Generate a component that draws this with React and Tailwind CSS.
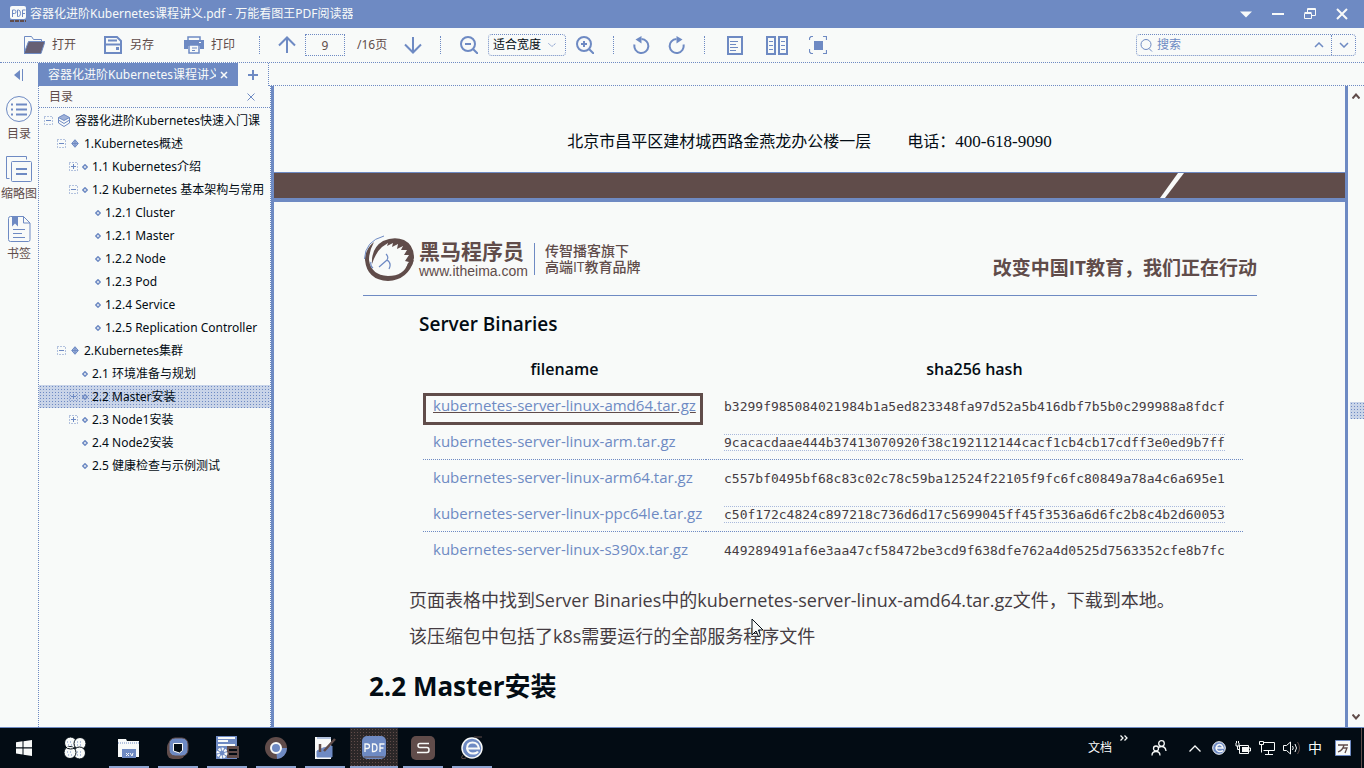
import React from "react";

const tree = [
  { level: 0, mark: "-", text: "容器化进阶Kubernetes快速入门课" },
  { level: 1, mark: "-", text: "1.Kubernetes概述" },
  { level: 2, mark: "+", text: "1.1 Kubernetes介绍" },
  { level: 2, mark: "-", text: "1.2 Kubernetes 基本架构与常用" },
  { level: 3, text: "1.2.1 Cluster" },
  { level: 3, text: "1.2.1 Master" },
  { level: 3, text: "1.2.2 Node" },
  { level: 3, text: "1.2.3 Pod" },
  { level: 3, text: "1.2.4 Service" },
  { level: 3, text: "1.2.5 Replication Controller" },
  { level: 1, mark: "-", text: "2.Kubernetes集群" },
  { level: 2, text: "2.1 环境准备与规划" },
  { level: 2, mark: "+", text: "2.2 Master安装", selected: true },
  { level: 2, mark: "+", text: "2.3 Node1安装" },
  { level: 2, text: "2.4 Node2安装" },
  { level: 2, text: "2.5 健康检查与示例测试" },
];

const levelStyle = [
  "pl-[5px] gap-1",
  "pl-[18px] gap-1",
  "pl-[30px] gap-[3px]",
  "pl-[43px] gap-[3px]",
];

const files = [
  ["kubernetes-server-linux-amd64.tar.gz", "b3299f985084021984b1a5ed823348fa97d52a5b416dbf7b5b0c299988a8fdcf"],
  ["kubernetes-server-linux-arm.tar.gz", "9cacacdaae444b37413070920f38c192112144cacf1cb4cb17cdff3e0ed9b7ff"],
  ["kubernetes-server-linux-arm64.tar.gz", "c557bf0495bf68c83c02c78c59ba12524f22105f9fc6fc80849a78a4c6a695e1"],
  ["kubernetes-server-linux-ppc64le.tar.gz", "c50f172c4824c897218c736d6d17c5699045ff45f3536a6d6fc2b8c4b2d60053"],
  ["kubernetes-server-linux-s390x.tar.gz", "449289491af6e3aa47cf58472be3cd9f638dfe762a4d0525d7563352cfe8b7fc"],
];

function Svg({ w, h, children, className = "", sw = 2 }) {
  return (
    <svg width={w} height={h} viewBox={`0 0 ${w} ${h}`} fill="none" stroke="currentColor" strokeWidth={sw} className={`shrink-0 ${className}`} aria-hidden="true">
      {children}
    </svg>
  );
}

function Sep({ className = "" }) {
  return <div className={`h-[18px] border-l border-dotted border-[#6e8ac3] ${className}`} />;
}

function TitleBar() {
  return (
    <header className="flex h-7 shrink-0 items-center bg-[#6e8ac3] pl-[9px] text-[#f8faf9]">
      <Svg w={18} h={16} sw={1}>
        <rect x="1" y="0" width="16" height="13" rx="2" fill="#f8faf9" stroke="none" />
        <path d="M3.500 11V4h2q1.500 0 1.500 1.800T5.500 7.500h-2M8.500 4v6.500h1q2 0 2-3.200T9.500 4zM13.500 11V4h3M13.500 7.500h2.500" stroke="#6e8ac3" />
        <path d="M1 15h16" stroke="#604c4a" strokeWidth="2" strokeDasharray="4 1" />
      </Svg>
      <h1 className="ml-[3px] truncate text-xs">容器化进阶Kubernetes课程讲义.pdf - 万能看图王PDF阅读器</h1>
      <div className="ml-auto flex items-center pr-[6px]">
        <button aria-label="菜单" className="flex h-7 w-8 items-center justify-center">
          <Svg w={12} h={7}><path d="M0 0.500h12L6 6.500z" fill="currentColor" stroke="none" /></Svg>
        </button>
        <button aria-label="最小化" className="flex h-7 w-8 items-center justify-center">
          <Svg w={12} h={12}><path d="M0 6h12" /></Svg>
        </button>
        <button aria-label="还原" className="flex h-7 w-8 items-center justify-center">
          <Svg w={12} h={12} sw={1}><path d="M.5 5.500h7v5h-7zM.5 4.500h7M3.500 4.500v-4h8v7h-4M3.500 1.500h8" /></Svg>
        </button>
        <button aria-label="关闭" className="flex h-7 w-8 items-center justify-center">
          <Svg w={12} h={12}><path d="M1 1l10 10M11 1L1 11" /></Svg>
        </button>
      </div>
    </header>
  );
}

function Toolbar() {
  return (
    <div className="flex h-[35px] shrink-0 items-center border-b border-dotted border-[#6e8ac3] pl-6 pr-2 text-xs text-[#6e8ac3]">
      <button className="flex items-center gap-[7px]">
        <Svg w={21} h={18} sw={1}>
          <path d="M.5 16V.5h7l2 3h8V6" />
          <path d="M4.500 5.500h16.500l-4 12H0z" fill="#665f74" stroke="#6e8ac3" />
        </Svg>
        <span className="text-[#604c4a]">打开</span>
      </button>
      <button className="ml-7 flex items-center gap-2">
        <Svg w={18} h={18}>
          <path d="M1 1h12l4 4v12H1z" />
          <path d="M1 8.500h16" /><path d="M4 4.500h9" /><path d="M12 12.500h3" strokeWidth="3" />
        </Svg>
        <span className="text-[#604c4a]">另存</span>
      </button>
      <button className="ml-[30px] flex items-center gap-[7px]">
        <Svg w={20} h={18}>
          <path d="M4 5V1h12v4" strokeWidth="1.500" />
          <path d="M0 4h20v9h-4v-3H4v3H0z" fill="currentColor" stroke="none" />
          <path d="M5 9h10v8H5z" fill="#f8faf9" strokeWidth="1.500" /><path d="M8 12h5M8 14.500h3" strokeWidth="1" />
          <path d="M15 6.500h2" stroke="#f8faf9" strokeWidth="1" />
        </Svg>
        <span className="text-[#604c4a]">打印</span>
      </button>
      <Sep className="ml-6" />
      <button aria-label="上一页" className="ml-[18px]">
        <Svg w={18} h={18}><path d="M9 17V2M1 9.500L9 1.500l8 8" /></Svg>
      </button>
      <input aria-label="页码" defaultValue="9" className="ml-[9px] h-[22px] w-10 border border-dotted border-[#6e8ac3] bg-transparent text-center text-xs text-[#604c4a] outline-none" />
      <span className="ml-3 w-8 whitespace-nowrap text-[#604c4a]">/16页</span>
      <button aria-label="下一页" className="ml-[15px]">
        <Svg w={18} h={18}><path d="M9 1v15M1 8.500l8 8 8-8" /></Svg>
      </button>
      <Sep className="ml-[18px]" />
      <button aria-label="缩小" className="ml-[19px]">
        <Svg w={18} h={18}><circle cx="8" cy="8" r="7" /><path d="M5 8h6M13 13l5 5" /></Svg>
      </button>
      <div className="relative ml-[10px] flex items-center">
        <select aria-label="缩放" className="h-[22px] w-[78px] appearance-none rounded-sm border border-dotted border-[#6e8ac3] bg-transparent pl-1 text-xs text-[#030c14] outline-none">
          <option>适合宽度</option>
        </select>
        <Svg w={8} h={4} sw={1} className="pointer-events-none absolute right-[10px]"><path d="M.5 .5L4 3.500 7.500 .5" strokeDasharray="1.500 1" /></Svg>
      </div>
      <button aria-label="放大" className="ml-[10px]">
        <Svg w={18} h={18}><circle cx="8" cy="8" r="7" /><path d="M5 8h6M8 5v6M13 13l5 5" /></Svg>
      </button>
      <Sep className="ml-[19px]" />
      <button aria-label="向左旋转" className="ml-[19px]">
        <Svg w={17} h={19}><path d="M1.500 8.500a7 7 0 1 0 7-5.500" /><path d="M2.500 3.500L8.500 0v7.500z" fill="currentColor" stroke="none" /></Svg>
      </button>
      <button aria-label="向右旋转" className="ml-[18px]">
        <Svg w={17} h={19}><path d="M15.500 8.500a7 7 0 1 1-7-5.500" /><path d="M14.500 3.500L8.500 0v7.500z" fill="currentColor" stroke="none" /></Svg>
      </button>
      <Sep className="ml-[19px]" />
      <button aria-label="单页" className="ml-[22px]">
        <Svg w={16} h={19}><path d="M1 1h14v17H1z" /><path d="M3 5.500h8M3 8.500h6M3 11.500h8M3 14.500h6" strokeWidth="1" /></Svg>
      </button>
      <button aria-label="双页" className="ml-[23px]">
        <Svg w={22} h={19}><path d="M1 1h8v17H1zM13 1h8v17h-8z" /><path d="M3 5.500h4M3 9.500h4M3 13.500h4M15 5.500h4M15 9.500h4M15 13.500h4" strokeWidth="1" /></Svg>
      </button>
      <button aria-label="适合页面" className="ml-[21px]">
        <Svg w={18} h={18}><path d="M5 5h9v9H5z" fill="currentColor" stroke="none" /><path d="M.5 4V2L2 .5h2M14 .5h3.500V4M.5 13v3l1.500 1.500h2M14 17.500h3.500V14" strokeWidth="1.200" /></Svg>
      </button>
      <div className="ml-auto flex h-[22px] w-[220px] items-center rounded-sm border border-dotted border-[#6e8ac3] pl-[3px]">
        <Svg w={13} h={13} sw={1}><circle cx="6" cy="5.500" r="5" /><path d="M9 9.500l3 3" /></Svg>
        <input aria-label="搜索" placeholder="搜索" className="ml-1 w-0 flex-1 bg-transparent text-xs outline-none placeholder:text-[#6e8ac3]" />
        <button aria-label="上一个" className="flex h-5 w-6 items-center justify-center">
          <Svg w={10} h={6}><path d="M1 5l4-4 4 4" strokeWidth="1.500" /></Svg>
        </button>
        <button aria-label="下一个" className="flex h-5 w-6 items-center justify-center border-l border-dotted border-[#6e8ac3]">
          <Svg w={10} h={6}><path d="M1 1l4 4 4-4" strokeWidth="1.500" /></Svg>
        </button>
      </div>
    </div>
  );
}

function Rail() {
  const item = "flex h-15 flex-col items-center gap-[3px] whitespace-nowrap";
  return (
    <nav className="flex w-[38px] shrink-0 flex-col items-center text-xs text-[#6e8ac3]">
      <button aria-label="收起" className="flex h-8 items-center pb-2">
        <Svg w={10} h={12} sw={1}><path d="M6 1v10L0 6z" fill="currentColor" stroke="none" /><path d="M8.500 0v12" /></Svg>
      </button>
      <button className={item}>
        <Svg w={28} h={28} sw={1}><circle cx="14" cy="14" r="12.500" /><path d="M11 9.500h11M11 14.500h11M11 19.500h11M6 9.500h2M6 14.500h2M6 19.500h2" strokeWidth="2" /></Svg>
        <span className="leading-4 text-[#604c4a]">目录</span>
      </button>
      <button className={item}>
        <Svg w={28} h={28} sw={1}><path d="M4.500 23.500h-3v-22h20v3" /><rect x="6.500" y="6.500" width="20" height="20" rx="1" /><path d="M11 14h11M11 19h11" strokeWidth="2" /></Svg>
        <span className="leading-4 text-[#604c4a]">缩略图</span>
      </button>
      <button className={item}>
        <Svg w={28} h={28} sw={1}><path d="M18.500 1.500H5.500q-2 0-2 2v21q0 2 2 2h18q1.500 0 1.500-2V8z" /><path d="M18.500 1.500V8H25M8 14.500h12M8 18.500h9M8 22.500h12" /><path d="M7 1.500h6v10l-3-3-3 3z" fill="currentColor" stroke="none" /></Svg>
        <span className="leading-4 text-[#604c4a]">书签</span>
      </button>
    </nav>
  );
}

function Bullet({ level }) {
  if (level === 0) {
    return (
      <Svg w={12} h={13} sw={1}>
        <path d="M6 .5l5.500 3L6 6.500 .5 3.500z" fill="#9fb1d8" />
        <path d="M.5 3.500v5.500L6 12.500 11.500 9V3.500M.5 6L6 9.500 11.500 6" />
      </Svg>
    );
  }
  if (level === 1) {
    return <Svg w={8} h={9} sw={1}><path d="M4 .7l3.300 3.800L4 8.300 .7 4.500z" fill="#9fb1d8" /><path d="M4 1v7M1 4.500h6" /></Svg>;
  }
  return <Svg w={6} h={6} sw={1}><path d="M3 .8L5.200 3 3 5.200 .8 3z" strokeWidth="1.500" /></Svg>;
}

function Outline() {
  return (
    <aside className="flex w-[233px] shrink-0 flex-col overflow-hidden border-x border-dotted border-[#6e8ac3]">
      <div className="flex h-[22px] shrink-0 items-center justify-between border-b border-dotted border-[#6e8ac3] pl-[10px] pr-[15px] text-xs text-[#604c4a]">
        <h2>目录</h2>
        <button aria-label="关闭目录" className="text-[#6e8ac3]">
          <Svg w={8} h={8} sw={1}><path d="M.5 .5l7 7M7.500 .5l-7 7" /></Svg>
        </button>
      </div>
      <ul className="pt-px">
        {tree.map((n) => (
          <li
            key={n.text}
            className={`flex h-[23px] items-center whitespace-nowrap text-[#6e8ac3] ${levelStyle[n.level]} ${
              n.selected ? "bg-[#c9d4e8] bg-[radial-gradient(#6e8ac3_1px,transparent_1px)] bg-[length:3px_3px]" : ""
            }`}
          >
            <span className="w-[10px] shrink-0">
              {n.mark && (
                <Svg w={9} h={9} sw={1}>
                  <rect x=".5" y=".5" width="8" height="8" strokeDasharray="1 2" />
                  <path d={n.mark === "+" ? "M2 4.500h5M4.500 2v5" : "M2 4.500h5"} />
                </Svg>
              )}
            </span>
            <Bullet level={n.level} />
            <a href="#page" className="ml-px text-xs text-[#030c14]">{n.text}</a>
          </li>
        ))}
      </ul>
    </aside>
  );
}

function Logo() {
  return (
    <div className="flex items-center text-[#604c4a]">
      <svg width="52" height="48" viewBox="-1 -1 52 48" className="shrink-0" aria-hidden="true">
        <path d="M10 6Q1 13 1 24Q3 44 24 45Q44 44 50 24L44 27Q40 40 24 40Q7 39 5 24Q5 15 10 6z" fill="#604c4a" />
        <path d="M20 0Q1 5 .5 23" fill="none" stroke="#6e8ac3" />
        <path d="M8 28Q7 12 19 5Q30 0 40 4Q50 9 50 22L48 29L42 32L45 26L41 25L45 19L40 19L43 14L37 14L39 10L33 13L34 8L28 11L29 7L23 10L24 7L18 11Q12 16 8 28z" fill="#604c4a" />
        <path d="M22 18q3 3 1 6l-8 7M23 24q5 3 2 9M7 26q-1 4 2 6" fill="none" stroke="#6e8ac3" strokeWidth="1.200" />
      </svg>
      <div className="ml-1 flex flex-col">
        <span className="text-[21px] font-bold leading-6">黑马程序员</span>
        <span className="font-['Liberation_Sans',sans-serif] text-sm leading-4">www.itheima.com</span>
      </div>
      <div className="ml-[6px] flex flex-col border-l border-[#6e8ac3] pl-[10px] text-sm font-medium leading-4">
        <span>传智播客旗下</span>
        <span>高端IT教育品牌</span>
      </div>
    </div>
  );
}

function Document() {
  return (
    <main className="relative min-w-0 flex-1 overflow-hidden border-x-3 border-[#6e8ac3] font-['Open_Sans','Noto_Sans_CJK_SC',sans-serif] text-[#030c14]">
      <div className="flex h-[86px] items-center justify-center gap-9 pt-[26px] font-['Liberation_Serif','Noto_Sans_CJK_SC',serif] text-base">
        <span>北京市昌平区建材城西路金燕龙办公楼一层</span>
        <span>电话：<span className="text-[17px]">400-618-9090</span></span>
      </div>
      <div className="flex h-[30px] justify-end border-b-4 border-t border-[#6e8ac3] bg-[#604c4a] pr-40">
        <svg width="26" height="25" viewBox="0 0 26 25" aria-hidden="true"><path d="M1 25L19 0h6L6 25z" fill="#f8faf9" /></svg>
      </div>
      <div className="pl-[89px] pr-[88px]">
        <div className="flex items-center justify-between border-b border-[#6e8ac3] pb-3 pt-[33px]">
          <Logo />
          <span className="pt-[17px] text-[19px] font-bold leading-7 text-[#604c4a]">改变中国IT教育，我们正在行动</span>
        </div>
        <h3 className="mt-[14px] pl-[56px] text-[19px] font-semibold leading-7">Server Binaries</h3>
        <div className="pl-[60px]">
          <table className="relative mt-[13px] border-collapse text-left">
            <thead>
              <tr className="h-9 text-center text-base">
                <th className="w-[283px] font-semibold">filename</th>
                <th className="font-semibold">sha256 hash</th>
              </tr>
            </thead>
            <tbody>
              {files.map(([name, hash], i) => (
                <tr key={name} className={`h-[36px] ${i % 2 ? "border-b border-dotted border-[#6e8ac3]" : ""}`}>
                  <td className="relative whitespace-nowrap pl-[10px] text-[15px]">
                    <a href="#file" className={i === 0 ? "text-[#6e8ac3] underline decoration-[#604c4a]" : "text-[#6e8ac3]"}>{name}</a>
                    {i === 0 && <div className="pointer-events-none absolute left-0 right-[3px] top-[6px] h-8 border-3 border-[#604c4a]" />}
                  </td>
                  <td className="px-[18px]">
                    <code
                      className={`font-['DejaVu_Sans_Mono',monospace] text-[13px] text-[#453c42] ${
                        i % 2 ? "border-y border-dotted border-[#a9b9dc]" : ""
                      }`}
                    >
                      {hash}
                    </code>
                  </td>
                </tr>
              ))}
            </tbody>
          </table>
        </div>
        <div className="mt-[15px] pl-[46px] text-lg leading-9 text-[#453c42]">
          <p>页面表格中找到Server Binaries中的kubernetes-server-linux-amd64.tar.gz文件，下载到本地。</p>
          <p>该压缩包中包括了k8s需要运行的全部服务程序文件</p>
        </div>
        <h2 className="mt-3 pl-[6px] text-[26px] font-bold leading-10">2.2 Master安装</h2>
      </div>
      <svg width="14" height="20" viewBox="0 0 14 20" className="absolute left-[477px] top-[532px]" aria-hidden="true">
        <path d="M1 1v16l4-4 2.500 5.500 2-1L7.500 12H12z" fill="#f8faf9" stroke="#030c14" />
      </svg>
    </main>
  );
}

function ScrollBar() {
  return (
    <div className="flex w-4 shrink-0 flex-col items-center text-[#604c4a]">
      <button aria-label="向上滚动" className="flex h-5 items-center"><Svg w={8} h={6}><path d="M.5 5.500L4 1.500l3.500 4" /></Svg></button>
      <div className="flex w-full flex-1 flex-col pl-0.5">
        <div className="flex-[37]" />
        <div className="h-[17px] bg-[#c9d4e8] bg-[radial-gradient(#6e8ac3_1px,transparent_1px)] bg-[length:3px_3px]" />
        <div className="flex-[36]" />
      </div>
      <button aria-label="向下滚动" className="flex h-5 items-center"><Svg w={8} h={6}><path d="M.5 .5L4 4.500l3.500-4" /></Svg></button>
    </div>
  );
}

const B = "#6e8ac3";
const N = "#604c4a";
const W = "#f8faf9";

const apps = [
  {
    name: "文件资源管理器",
    icon: <><path d="M1 3h8l1 2h12v16H1z" fill={W} stroke="none" /><path d="M1 7h21" stroke={B} strokeDasharray="1 1" strokeWidth="1" /><path d="M5 13h14v9H5z" fill={B} stroke="none" /><path d="M9 17l3 3M12 17l-3 3M13 17l2 3 1-3" stroke={W} strokeWidth="1" /></>,
  },
  {
    name: "虚拟机",
    icon: <><rect x="1" y="5" width="18" height="18" rx="6" fill={N} stroke="none" /><rect x="3" y="2" width="19" height="18" rx="6" fill={B} stroke={N} strokeWidth="1" /><path d="M7.500 7.500h9v7l-3 2.500-6-2z" fill="#030c14" stroke={W} strokeWidth="1" /></>,
  },
  {
    name: "服务管理",
    icon: <><path d="M1 0h21v23H1z" fill={B} stroke="none" /><path d="M3 2h17M3 5h10M3 9h17" stroke={W} /><path d="M12 10h12v12H12z" fill={N} stroke="none" /><path d="M14 14h8M14 18h8" stroke="#030c14" /><circle cx="7" cy="17" r="4" stroke={W} strokeWidth="3" strokeDasharray="2 1" /></>,
  },
  {
    name: "浏览器",
    icon: <><circle cx="12" cy="12" r="11" fill={N} stroke="none" /><path d="M12 12h11a11 11 0 0 1-10 11z" fill={B} stroke="none" /><circle cx="12" cy="12" r="5" fill={B} stroke={W} /></>,
  },
  {
    name: "编辑器",
    icon: <><path d="M2 1h16v22H2z" fill={W} stroke="none" /><path d="M4 2h14M4 15l6-3 9-2v11H4z" fill={B} stroke={B} strokeWidth="1" /><path d="M7 8v8M11 15L22 3" stroke={N} strokeWidth="2.500" /></>,
  },
  {
    name: "PDF阅读器",
    active: true,
    icon: <><rect x="0" y="0" width="24" height="23" rx="5" fill={B} stroke="none" /><path d="M3 16V8h2q2.500 0 2.500 2.200T5 12.500H3M10.500 8v7.500h1.500q3 0 3-3.700T12 8zM18 16V8h4.500M18 12h3.500" stroke={W} strokeWidth="1.300" /><path d="M2 21h20" stroke={N} strokeWidth="1" /></>,
  },
  {
    name: "截图工具",
    icon: <><rect x="0" y="0" width="24" height="24" rx="5" fill={N} stroke="none" /><path d="M18 7.500H9q-2 0-2 2t2 2h7q2 0 2 2.500t-2 2.500H6" stroke={W} strokeWidth="1.500" /></>,
  },
  {
    name: "网络浏览器",
    icon: <><circle cx="12" cy="12" r="10" fill={B} stroke={W} strokeWidth="1.500" /><path d="M7 12.500h12q-1-6-6.500-6T7 12.500q1 5 6 5 4 0 5-2" stroke={W} /><path d="M3 19Q-1 24 6 22M14 1h8" stroke={N} strokeWidth="1" /></>,
  },
];

function TaskBar() {
  const slot = "flex h-10 w-6 items-center justify-center";
  return (
    <footer className="flex h-[41px] shrink-0 items-center border-t border-[#6e8ac3] bg-[#030c14] text-[#f8faf9]">
      <button aria-label="开始" className="flex h-10 w-12 items-center justify-center">
        <Svg w={16} h={16}><path d="M0 2.300L6.500 1.300v6H0zM7.500 1.200L16 0v7.300H7.500zM0 8.500h6.500v6L0 13.600zM7.500 8.500H16V16l-8.500-1.200z" fill="currentColor" stroke="none" /></Svg>
      </button>
      <button aria-label="助手" className="ml-[3px] mr-[6px] flex h-10 w-12 items-center justify-center">
        <Svg w={22} h={22} sw={1}>
          <g fill={W} stroke="#030c14"><circle cx="6.500" cy="6" r="6" /><circle cx="16" cy="6.500" r="6" /><circle cx="15.500" cy="16" r="6" /><circle cx="6" cy="15.500" r="6" /><path d="M11 11Q8 12 6.500 12A6 6 0 0 1 1 9" /></g>
          <g stroke={B} strokeDasharray="1 2"><path d="M3 5h6M4 8h5M13 5h6M13 8h5M3 15h6M4 18h5M13 15h6M13 18h5" /></g>
        </Svg>
      </button>
      <div className="flex gap-px">
        {apps.map((a) => (
          <button
            key={a.name}
            aria-label={a.name}
            className={`flex h-10 w-12 flex-col items-center justify-between pt-2 ${
              a.active ? "bg-[#2b2728] bg-[radial-gradient(#604c4a_1px,transparent_1px)] bg-[length:3px_3px]" : ""
            }`}
          >
            <Svg w={24} h={24}>{a.icon}</Svg>
            <span className={`h-0.5 bg-[#8fa5d2] ${a.active ? "w-full" : "w-10"}`} />
          </button>
        ))}
      </div>
      <div className="ml-auto flex items-center pr-[2px]">
        <button className="text-xs">文档</button>
        <button aria-label="更多" className="ml-2 flex h-10 items-start pt-[7px]">
          <Svg w={8} h={6} sw={1}><path d="M.5 .5L3 3 .5 5.500M4.500 .5L7 3 4.500 5.500" strokeWidth="1.300" /></Svg>
        </button>
        <button aria-label="联系人" className="ml-[23px] mr-[16px]">
          <Svg w={16} h={16} sw={1}><circle cx="10.500" cy="3.500" r="2.800" strokeWidth="1.300" /><circle cx="5" cy="8.500" r="2.500" strokeWidth="1.300" /><path d="M1 15.500q0-4 4-4t4 4M7.500 7.500q1.500-1 3-1 4 0 4.500 4.500" strokeWidth="1.300" /></Svg>
        </button>
        <button aria-label="显示隐藏的图标" className={slot}><Svg w={12} h={7} sw={1}><path d="M.5 6.500L6 1l5.500 5.500" strokeWidth="1.300" /></Svg></button>
        <button aria-label="浏览器状态" className={slot}>
          <Svg w={14} h={14}><circle cx="7" cy="7" r="6.300" fill={B} stroke={W} strokeWidth="1" /><path d="M4 7h7q-1-3.500-3.500-3.500T4 7q.5 3.500 4 3.500 2 0 3-1" stroke={W} strokeWidth="1.500" /></Svg>
        </button>
        <button aria-label="电池" className={slot}>
          <Svg w={16} h={14} sw={1}><path d="M4.500 4.500h9v8h-9zM14 7h1.500v3H14" /><path d="M7 6h6v5H7z" fill="currentColor" stroke="none" /><path d="M1 2v3h3V2M1.500 0v2M3.500 0v2M2.500 5v3.500h2" /></Svg>
        </button>
        <button aria-label="网络" className={slot}>
          <Svg w={16} h={14} sw={1}><path d="M4.500 1.500h11v8h-11M9.500 9.500v4M6 13.500h8M.5 .5h4v3h-4zM2.500 3.500v8" /></Svg>
        </button>
        <button aria-label="音量" className={slot}>
          <Svg w={17} h={14} sw={1}><path d="M.5 4.500h3l4-3.500v12l-4-3.500h-3z" /><path d="M9.500 5q1.500 2 0 4M12 3q3 4 0 8" /><path d="M14.500 1q4 6 0 12" stroke={N} /></Svg>
        </button>
        <button className="flex h-10 w-6 items-center justify-center text-sm">中</button>
        <button aria-label="输入法" className="ml-1 mr-[6px] flex h-10 w-6 items-center justify-center">
          <Svg w={16} h={16} sw={1}><path d="M.5 .5h15v15H.5z" fill={W} stroke={B} /><path d="M3 5h10M9 5q-1 5-6 7M8 8h4l-2 5" stroke={N} strokeWidth="1.300" /></Svg>
        </button>
        <div className="h-10 w-px bg-[#604c4a]" />
      </div>
    </footer>
  );
}

export default function App() {
  return (
    <div className="flex h-screen flex-col bg-[#f8faf9] font-['Noto_Sans','Noto_Sans_CJK_SC',sans-serif]">
      <TitleBar />
      <Toolbar />
      <div className="flex min-h-0 flex-1">
        <Rail />
        <div className="flex min-w-0 flex-1 flex-col">
          <div className="flex h-[23px] shrink-0 text-xs">
            <div className="flex w-[200px] items-center gap-1 bg-[#6e8ac3] pl-[10px] pr-[10px] text-[#f8faf9]">
              <span className="flex-1 overflow-hidden whitespace-nowrap">容器化进阶Kubernetes课程讲义</span>
              <button aria-label="关闭标签"><Svg w={8} h={8}><path d="M1 1l6 6M7 1L1 7" strokeWidth="1.500" /></Svg></button>
            </div>
            <button aria-label="新建标签" className="flex w-[31px] items-center justify-center border-r border-dotted border-[#6e8ac3] text-[#6e8ac3]">
              <Svg w={10} h={10}><path d="M0 5h10M5 0v10" /></Svg>
            </button>
            <div className="flex-1 border-b border-dotted border-[#6e8ac3]" />
          </div>
          <div className="flex min-h-0 flex-1">
            <Outline />
            <Document />
            <ScrollBar />
          </div>
        </div>
      </div>
      <TaskBar />
    </div>
  );
}
